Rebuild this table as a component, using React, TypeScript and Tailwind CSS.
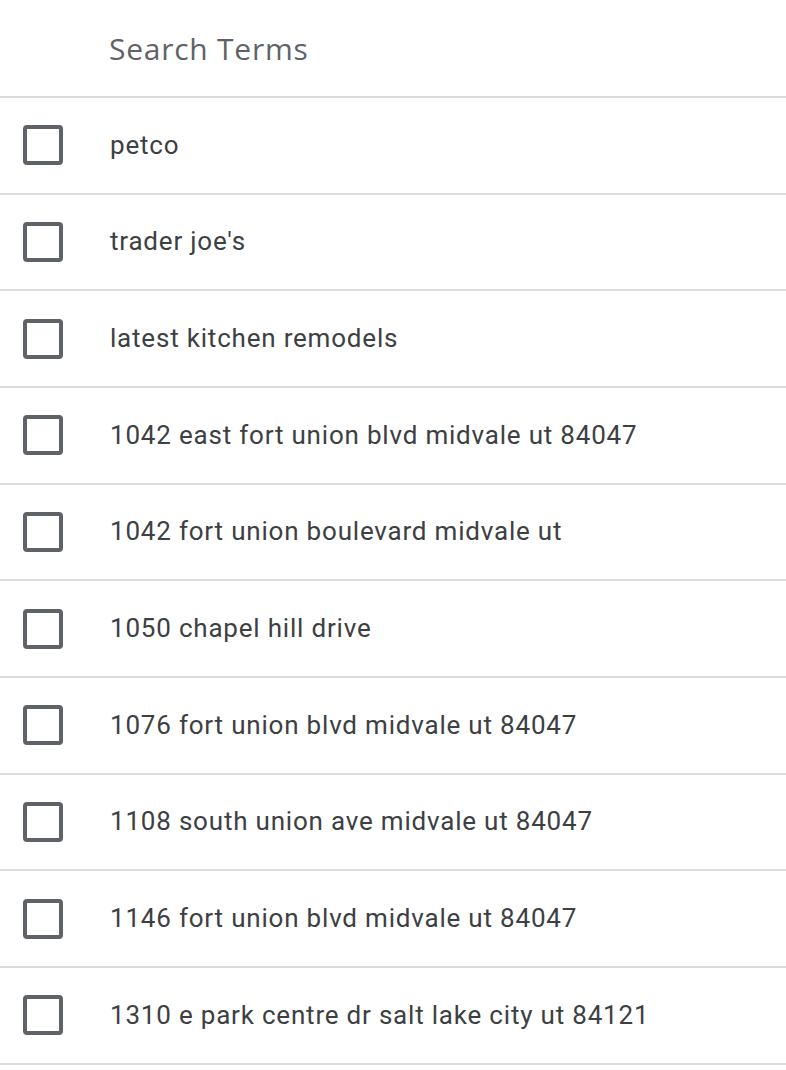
import React from "react";

const terms = [
  "petco",
  "trader joe's",
  "latest kitchen remodels",
  "1042 east fort union blvd midvale ut 84047",
  "1042 fort union boulevard midvale ut",
  "1050 chapel hill drive",
  "1076 fort union blvd midvale ut 84047",
  "1108 south union ave midvale ut 84047",
  "1146 fort union blvd midvale ut 84047",
  "1310 e park centre dr salt lake city ut 84121",
];

export default function App() {
  return (
    <div className="w-[786px] h-[1070px] bg-white overflow-hidden" style={{ fontFamily: "Roboto, 'Liberation Sans', sans-serif" }}>
      <div className="h-[98px] border-b-2 border-[#dadce0] flex items-center pl-[109px]">
        <span className="text-[30px] font-medium text-[#5f6368] tracking-[0.75px]" style={{ fontFamily: "'Open Sans', Roboto, sans-serif" }}>
          Search Terms
        </span>
      </div>
      {terms.map((t) => (
        <div key={t} className="h-[96.67px] border-b-2 border-[#dadce0] flex items-center">
          <div className="w-[110px] flex items-center pl-[23px]">
            <div className="w-[40px] h-[40px] border-[4px] border-[#5f6368] rounded-[4px]" />
          </div>
          <span className="text-[26px] text-[#3c4043] tracking-[0.8px]">{t}</span>
        </div>
      ))}
    </div>
  );
}
